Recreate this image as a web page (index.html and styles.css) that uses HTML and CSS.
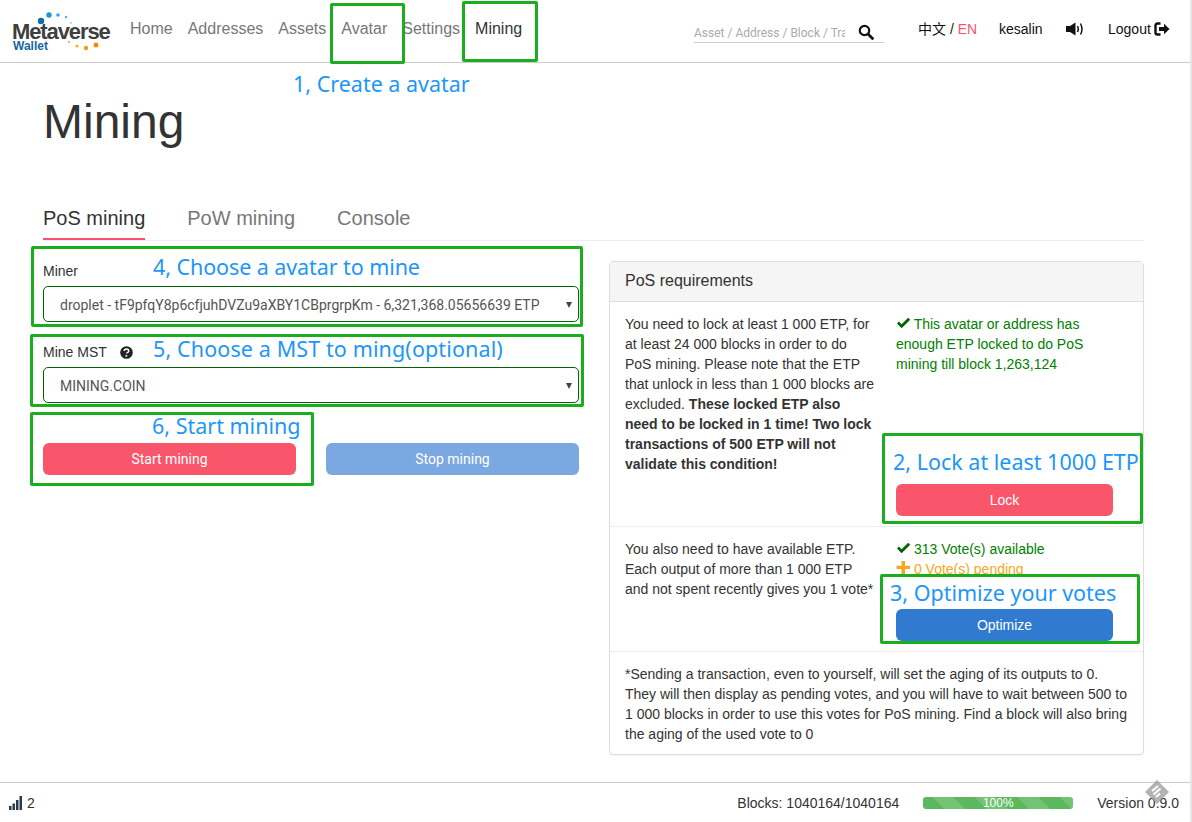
FILE: index.html
```html
<!DOCTYPE html>
<html lang="en">
<head>
  <meta charset="UTF-8" />
  <title>Mining</title>
  <link rel="stylesheet" href="styles.css">
</head>
<body>
  <div class="page">
    <!-- Top bar -->
    <nav class="navbar">
      <a class="logo">
        <svg class="logo-dots" width="100" height="44" viewBox="0 0 100 44">
          <circle cx="29" cy="10" r="3.200" fill="#0f6ea8"/>
          <circle cx="37" cy="4" r="2.700" fill="#1b93d6"/>
          <circle cx="46" cy="4" r="1.800" fill="#2aa7e8"/>
          <circle cx="54" cy="6" r="1.200" fill="#3cb6ee"/>
          <circle cx="59" cy="12" r="0.800" fill="#3cb6ee"/>
          <circle cx="57" cy="31" r="1.200" fill="#f7c21b"/>
          <circle cx="65" cy="35" r="1.600" fill="#f9b116"/>
          <circle cx="74" cy="37" r="2.200" fill="#f89a12"/>
          <circle cx="84" cy="34" r="2.500" fill="#f58a0d"/>
        </svg>
        <span class="logo-name">Metaverse</span>
        <span class="logo-sub">Wallet</span>
      </a>
      <ul class="nav-links">
        <li>Home</li>
        <li>Addresses</li>
        <li>Assets</li>
        <li>Avatar</li>
        <li>Settings</li>
        <li class="active">Mining</li>
      </ul>
      <div class="search">
        <span class="search-text">Asset / Address / Block / Tra</span>
        <svg class="icon-search" width="16" height="16" viewBox="0 0 16 16">
          <circle cx="6.500" cy="6.500" r="4.700" fill="none" stroke="#111" stroke-width="2.200"/>
          <path d="M10 10l4.500 4.500" stroke="#111" stroke-width="2.800" stroke-linecap="round"/>
        </svg>
      </div>
      <div class="nav-right">
        <span class="lang">中文 / <span class="lang-on">EN</span></span>
        <span class="user">kesalin</span>
        <svg class="icon-sound" width="18" height="14" viewBox="0 0 18 14">
          <path d="M0 4h4L9.500 .5v13L4 10H0z" fill="#111"/>
          <path d="M11.500 4q1.500 3 0 6M14.500 1.500q3 5.500 0 11" fill="none" stroke="#111" stroke-width="1.500"/>
        </svg>
        <span class="logout">Logout
          <svg width="16" height="14" viewBox="0 0 16 14">
            <path d="M6.500 1.500H3.500Q1.500 1.500 1.500 3.500v7q0 2 2 2h3" fill="none" stroke="#111" stroke-width="2.400"/>
            <path d="M5 5h5V1.800L15.500 7 10 12.200V9H5z" fill="#111"/>
          </svg>
        </span>
      </div>
    </nav>

    <main class="content">
      <h1>Mining</h1>

      <ul class="tabs">
        <li class="active">PoS mining</li>
        <li>PoW mining</li>
        <li>Console</li>
      </ul>

      <div class="columns">
        <!-- Left: mining form -->
        <section class="mine-form">
          <div class="field">
            <label>Miner</label>
            <div class="select-box">
              <span>droplet - tF9pfqY8p6cfjuhDVZu9aXBY1CBprgrpKm - 6,321,368.05656639 ETP</span>
              <i class="caret"></i>
            </div>
          </div>
          <div class="field">
            <label>Mine MST
              <svg class="icon-help" width="13" height="13" viewBox="0 0 13 13">
                <circle cx="6.500" cy="6.500" r="6.300" fill="#222"/>
                <path d="M4.300 5.100q0-2 2.200-2t2.200 1.800q0 1-1 1.500t-1 1.200" fill="none" stroke="#fff" stroke-width="1.500"/>
                <rect x="5.500" y="9" width="1.700" height="1.700" fill="#fff"/>
              </svg>
            </label>
            <div class="select-box">
              <span>MINING.COIN</span>
              <i class="caret"></i>
            </div>
          </div>
          <div class="form-buttons">
            <button class="btn btn-red">Start mining</button>
            <button class="btn btn-faded">Stop mining</button>
          </div>
        </section>

        <!-- Right: requirements -->
        <section class="panel">
          <div class="panel-heading">PoS requirements</div>
          <div class="panel-row row-lock">
            <div class="row-text">
              You need to lock at least 1 000 ETP, for at least 24 000 blocks in order to do PoS mining. Please note that the ETP that unlock in less than 1 000 blocks are excluded.
              <b>These locked ETP also need to be locked in 1 time! Two lock transactions of 500 ETP will not validate this condition!</b>
            </div>
            <div class="row-side">
              <div class="ok">
                <svg class="icon-state" width="15" height="12" viewBox="0 0 15 12"><path d="M1 6.500l1.900-2L5.600 7.200 12.200.8 14.200 2.800 5.600 11.300z" fill="#006400"/></svg>
                This avatar or address has enough ETP locked to do PoS mining till block 1,263,124
              </div>
              <button class="btn btn-red">Lock</button>
            </div>
          </div>
          <div class="panel-row row-votes">
            <div class="row-text">
              You also need to have available ETP. Each output of more than 1 000 ETP and not spent recently gives you 1 vote*
            </div>
            <div class="row-side">
              <div class="ok">
                <svg class="icon-state" width="15" height="12" viewBox="0 0 15 12"><path d="M1 6.500l1.900-2L5.600 7.200 12.200.8 14.200 2.800 5.600 11.300z" fill="#006400"/></svg>
                313 Vote(s) available
              </div>
              <div class="pending">
                <svg class="icon-state" width="15" height="13" viewBox="0 0 15 13"><path d="M5.500 0h3.500v4.700H14v3.400H9V13H5.500V8.100H.5V4.700h5z" fill="#f5a623"/></svg>
                0 Vote(s) pending
              </div>
              <button class="btn btn-blue">Optimize</button>
            </div>
          </div>
          <div class="panel-note">
            *Sending a transaction, even to yourself, will set the aging of its outputs to 0. They will then display as pending votes, and you will have to wait between 500 to 1 000 blocks in order to use this votes for PoS mining. Find a block will also bring the aging of the used vote to 0
          </div>
        </section>
      </div>
    </main>

    <footer class="footer">
      <span class="peers">
        <svg width="15" height="14" viewBox="0 0 15 14">
          <rect x="0" y="10" width="2.500" height="4" fill="#2a3b4d"/>
          <rect x="3.500" y="7.500" width="2.500" height="6.500" fill="#2a3b4d"/>
          <rect x="7" y="4" width="2.500" height="10" fill="#2a3b4d"/>
          <rect x="10.500" y="0" width="2.500" height="14" fill="#2a3b4d"/>
        </svg>
        2
      </span>
      <span class="blocks">Blocks: 1040164/1040164</span>
      <div class="progress">100%</div>
      <span class="version">Version 0.9.0</span>
    </footer>

    <!-- Tutorial marks drawn over the screenshot -->
    <div class="mark mark-avatar"></div>
    <div class="mark mark-mining"></div>
    <div class="mark mark-miner"></div>
    <div class="mark mark-mst"></div>
    <div class="mark mark-start"></div>
    <div class="mark mark-lock"></div>
    <div class="mark mark-optimize"></div>

    <div class="note note-1">1, Create a avatar</div>
    <div class="note note-2">2, Lock at least 1000 ETP</div>
    <div class="note note-3">3, Optimize your votes</div>
    <div class="note note-4">4, Choose a avatar to mine</div>
    <div class="note note-5">5, Choose a MST to ming(optional)</div>
    <div class="note note-6">6, Start mining</div>

    <svg class="watermark" width="26" height="26" viewBox="0 0 26 26">
      <path d="M13 1L25 13 13 25 1 13z" fill="#999" opacity=".75"/>
      <path d="M8 12l6-5M9.500 15.500l7-6M12 18l4-3.500" stroke="#fff" stroke-width="2"/>
    </svg>
  </div>
</body>
</html>
```

FILE: styles.css
```css
* {
  box-sizing: border-box;
}
html, body {
  margin: 0;
  height: 100%;
  overflow: hidden;
}
body {
  font-family: "Liberation Sans", Arial, sans-serif;
  font-size: 14px;
  line-height: 20px;
  color: #333;
  background: #fff;
}
.page {
  position: relative;
  display: flex;
  flex-direction: column;
  height: 822px;
  border-right: 2px solid #e6e6e6;
}

/* navbar */
.navbar {
  display: flex;
  align-items: flex-start;
  height: 63px;
  flex: none;
  border-bottom: 1px solid #ccc;
}
.logo {
  position: relative;
  display: block;
  width: 130px;
  height: 62px;
  flex: none;
}
.logo-dots {
  position: absolute;
  left: 12px;
  top: 11px;
}
.logo-name {
  position: absolute;
  left: 12px;
  top: 17px;
  font-size: 22px;
  line-height: 30px;
  font-weight: bold;
  letter-spacing: -1.100px;
  color: #3f3f3f;
}
.logo-sub {
  position: absolute;
  left: 13px;
  top: 38px;
  font-size: 12px;
  line-height: 16px;
  font-weight: bold;
  color: #15689c;
}
.nav-links {
  display: flex;
  list-style: none;
  margin: 0;
  padding: 0;
  width: 564px;
  flex: none;
}
.nav-links li {
  font-size: 16px;
  line-height: 22px;
  padding-top: 18px;
  margin-right: 15px;
  color: #777;
}
.nav-links li.active {
  color: #333;
}
.search {
  display: flex;
  justify-content: space-between;
  align-items: center;
  width: 190px;
  height: 43px;
  padding: 24px 10px 0 0;
  border-bottom: 1px solid #ccc;
  flex: none;
}
.search-text {
  width: 151px;
  overflow: hidden;
  white-space: nowrap;
  font-family: Roboto, sans-serif;
  font-size: 12px;
  line-height: 16px;
  color: #aaa;
}
.icon-search {
  margin-top: -2px;
}
.nav-right {
  display: flex;
  align-items: center;
  height: 58px;
  margin-left: 34px;
  font-size: 14px;
  color: #111;
}
.lang {
  font-family: "Liberation Sans", "Noto Sans CJK SC", sans-serif;
  width: 81px;
}
.lang-on {
  color: #f9546b;
}
.user {
  width: 67px;
}
.icon-sound {
  margin-right: 24px;
}
.logout {
  display: flex;
  align-items: center;
  gap: 3px;
}

/* main area */
.content {
  flex: 1;
  padding: 0 46px 0 43px;
}
h1 {
  font-size: 48px;
  line-height: 55px;
  font-weight: normal;
  margin: 31px 0 0;
  color: #333;
}
.tabs {
  display: flex;
  gap: 42px;
  list-style: none;
  margin: 43px 0 0;
  padding: 0;
  height: 49px;
  border-bottom: 1px solid #eee;
}
.tabs li {
  font-size: 20px;
  line-height: 24px;
  height: 48px;
  padding-top: 14px;
  color: #777;
}
.tabs li.active {
  color: #333;
  border-bottom: 2px solid #f9546b;
}
.columns {
  display: flex;
  gap: 30px;
  padding-top: 20px;
}
.mine-form {
  width: 536px;
  flex: none;
}

/* form */
.field {
  margin-bottom: 20px;
}
.field label {
  display: flex;
  align-items: center;
  gap: 13px;
  height: 20px;
  margin-bottom: 5px;
  color: #333;
}
.select-box {
  position: relative;
  height: 36px;
  padding: 8px 16px;
  border: 1px solid #006400;
  border-radius: 5px;
  font-family: Roboto, sans-serif;
  color: #555;
  white-space: nowrap;
}
.caret {
  position: absolute;
  right: 6px;
  top: 15px;
  border-left: 3px solid transparent;
  border-right: 3px solid transparent;
  border-top: 6px solid #444;
}
.form-buttons {
  display: flex;
  gap: 30px;
  padding-top: 20px;
}
.btn {
  display: block;
  height: 32px;
  border: none;
  border-radius: 6px;
  font-family: "Liberation Sans", Arial, sans-serif;
  font-size: 14px;
  color: #fff;
}
.form-buttons .btn {
  flex: 1;
  font-family: Roboto, sans-serif;
}
.btn-red {
  background: #f9566c;
}
.btn-blue {
  background: #307ad0;
}
.btn-faded {
  background: #7ba8e0;
}

/* requirements panel */
.panel {
  width: 535px;
  flex: none;
  border: 1px solid #ddd;
  border-radius: 4px;
  box-shadow: 0 1px 1px rgba(0, 0, 0, 0.05);
}
.panel-heading {
  height: 40px;
  padding: 9px 15px;
  font-size: 16px;
  line-height: 20px;
  color: #333;
  background: #f5f5f5;
  border-bottom: 1px solid #ddd;
}
.panel-row {
  display: flex;
  padding: 12px 15px 10px;
  border-bottom: 1px solid #eee;
}
.row-lock {
  height: 225px;
}
.row-votes {
  height: 125px;
}
.row-text {
  width: 251px;
  flex: none;
}
.row-side {
  display: flex;
  flex-direction: column;
  width: 217px;
  margin-left: 20px;
  flex: none;
}
.row-side .btn {
  margin-top: auto;
  flex: none;
}
.icon-state {
  margin-right: -1px;
}
.ok {
  color: #008000;
}
.pending {
  color: #f5a623;
}
.panel-note {
  padding: 12px 15px 10px;
}

/* footer */
.footer {
  display: flex;
  align-items: center;
  height: 40px;
  flex: none;
  padding: 0 11px 0 9px;
  border-top: 1px solid #ccc;
}
.peers {
  display: flex;
  align-items: center;
  gap: 3px;
  margin-right: auto;
}
.progress {
  width: 150px;
  height: 12px;
  margin: 0 24px;
  border-radius: 3px;
  font-size: 12px;
  line-height: 12px;
  text-align: center;
  color: #fff;
  background: repeating-linear-gradient(45deg, #5cb85c 0 15px, #74c274 15px 30px);
}

/* tutorial marks */
.mark {
  position: absolute;
  border: 3px solid #1aae1f;
  border-radius: 2px;
}
.mark-avatar { left: 330px; top: 3px; width: 75px; height: 61px; }
.mark-mining { left: 462px; top: 1px; width: 76px; height: 61px; }
.mark-miner { left: 31px; top: 246px; width: 552px; height: 81px; }
.mark-mst { left: 30px; top: 334px; width: 554px; height: 73px; }
.mark-start { left: 30px; top: 412px; width: 284px; height: 74px; }
.mark-lock { left: 882px; top: 433px; width: 261px; height: 91px; }
.mark-optimize { left: 880px; top: 574px; width: 260px; height: 70px; }

.note {
  position: absolute;
  font-family: "Noto Sans", sans-serif;
  font-size: 21.500px;
  line-height: 30px;
  white-space: nowrap;
  color: #1c96fb;
}
.note-1 { left: 293px; top: 69px; }
.note-2 { left: 893px; top: 447px; }
.note-3 { left: 890px; top: 578px; }
.note-4 { left: 153px; top: 252px; letter-spacing: -0.080px; }
.note-5 { left: 153px; top: 334px; letter-spacing: 0.120px; }
.note-6 { left: 152px; top: 411px; }

.watermark {
  position: absolute;
  left: 1144px;
  top: 779px;
}
```
